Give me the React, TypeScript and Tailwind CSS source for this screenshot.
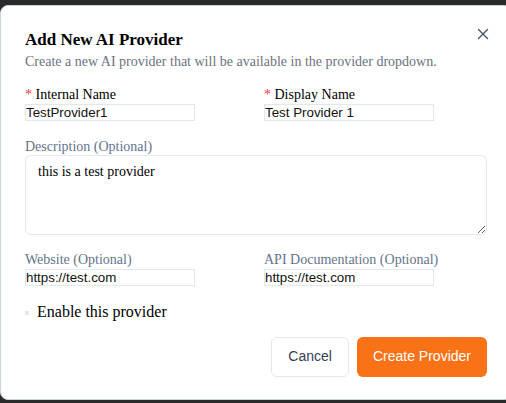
import React from "react";

const serif = { fontFamily: '"Liberation Serif", "Times New Roman", serif' };

function Label({ children, required }: { children: React.ReactNode; required?: boolean }) {
  return (
    <label
      className={`block text-[14px] leading-[17.5px] ${required ? "text-black" : "text-[#64748b]"}`}
      style={serif}
    >
      {required && <span className="text-[#ef4444]">* </span>}
      {children}
    </label>
  );
}

function TextInput({ value }: { value: string }) {
  return (
    <input
      type="text"
      defaultValue={value}
      className="block w-[170px] h-[17px] border border-[#e2e8f0] bg-white px-0 text-[13.33px] leading-[15px] text-[#111] outline-none"
      style={{ fontFamily: '"Liberation Sans", Arial, sans-serif' }}
    />
  );
}

export default function App() {
  return (
    <div className="min-h-[403px] w-[506px] overflow-hidden bg-[#2a2a2a] pt-[5px]">
      <div className="relative w-[512px] rounded-lg border border-[#cbd5e1] bg-white pl-6 pr-6 pt-[22px] pb-[22px]">
        <button className="absolute right-[22px] top-[22px] flex h-3 w-3 items-center justify-center text-[#4b5563]">
          <svg width="12" height="12" viewBox="0 0 12 12" fill="none" stroke="currentColor" strokeWidth="1.4" strokeLinecap="round">
            <path d="M1.5 1.5L10.5 10.5M10.5 1.5L1.5 10.5" />
          </svg>
        </button>

        <h2 className="text-[17px] font-bold leading-[24px] text-black" style={serif}>
          Add New AI Provider
        </h2>
        <p className="text-[14px] leading-5 text-[#6b7280]" style={serif}>
          Create a new AI provider that will be available in the provider dropdown.
        </p>

        <div className="mt-[14px] grid grid-cols-2 gap-x-4">
          <div>
            <Label required>Internal Name</Label>
            <TextInput value="TestProvider1" />
          </div>
          <div>
            <Label required>Display Name</Label>
            <TextInput value="Test Provider 1" />
          </div>
        </div>

        <div className="mt-[17px]">
          <Label>Description (Optional)</Label>
          <textarea
            defaultValue="this is a test provider"
            className="block h-[80px] w-full rounded-md border border-[#e2e8f0] bg-white px-3 py-[6px] text-[14px] leading-5 text-black outline-none"
            style={serif}
          />
        </div>

        <div className="mt-4 grid grid-cols-2 gap-x-4">
          <div>
            <Label>Website (Optional)</Label>
            <TextInput value="https://test.com" />
          </div>
          <div>
            <Label>API Documentation (Optional)</Label>
            <TextInput value="https://test.com" />
          </div>
        </div>

        <div className="mt-4 flex items-center">
          <span className="mt-[2px] block h-[4px] w-[4px] bg-[#e5e7eb]" />
          <span className="ml-2 text-[16px] leading-5 text-black" style={serif}>
            Enable this provider
          </span>
        </div>

        <div
          className="mt-[15px] flex justify-end gap-2"
          style={{ fontFamily: '"Liberation Sans", Arial, sans-serif' }}
        >
          <button className="h-10 rounded-md border border-[#e2e8f0] bg-white px-4 text-[14px] text-[#334155]">
            Cancel
          </button>
          <button className="h-10 rounded-md bg-[#f97316] px-4 text-[14px] text-white">
            Create Provider
          </button>
        </div>
      </div>
    </div>
  );
}
